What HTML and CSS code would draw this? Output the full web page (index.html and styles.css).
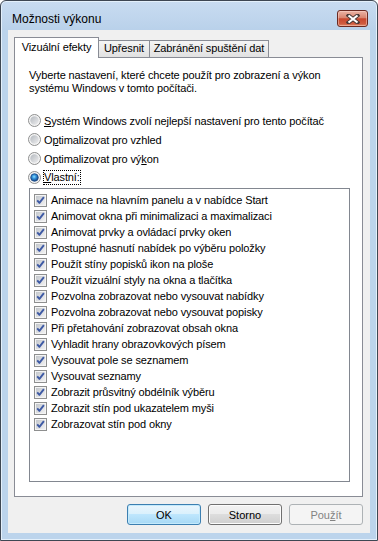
FILE: index.html
```html
<!DOCTYPE html>
<html lang="cs">
<head>
    <meta charset="UTF-8">
    <meta name="viewport" content="width=device-width, initial-scale=1.0">
    <title>Možnosti výkonu</title>
    <link rel="stylesheet" href="styles.css">
</head>
<body>

<svg class="sprites" width="0" height="0">
    <defs>
        <linearGradient id="cbfill" x1="0" y1="0" x2="1" y2="1">
            <stop offset="0" stop-color="#c3c7cc"/>
            <stop offset="1" stop-color="#f1f1f2"/>
        </linearGradient>
        <linearGradient id="rbfill" x1="0" y1="0" x2="1" y2="1">
            <stop offset="0" stop-color="#b4b9bf"/>
            <stop offset="1" stop-color="#eeeeef"/>
        </linearGradient>
        <radialGradient id="dot" cx="0.45" cy="0.4" r="0.6">
            <stop offset="0" stop-color="#8ee0ff"/>
            <stop offset="0.45" stop-color="#2f8ed8"/>
            <stop offset="1" stop-color="#173f7c"/>
        </radialGradient>
        <symbol id="cb" viewBox="0 0 13 13">
            <rect x="0.5" y="0.5" width="12" height="12" fill="#f4f4f4" stroke="#8e8f8f"/>
            <rect x="2" y="2" width="9" height="9" fill="url(#cbfill)"/>
            <path d="M3.2 6.4 L5.4 8.9 L9.9 3.1" fill="none" stroke="#3e5aa4" stroke-width="1.9" stroke-linejoin="round"/>
        </symbol>
        <symbol id="rb" viewBox="0 0 13 13">
            <circle cx="6.5" cy="6.5" r="6" fill="#f4f4f4" stroke="#8e8f8f"/>
            <circle cx="6.5" cy="6.5" r="4.2" fill="url(#rbfill)"/>
        </symbol>
        <symbol id="rbon" viewBox="0 0 13 13">
            <circle cx="6.5" cy="6.5" r="6" fill="#f4f4f4" stroke="#8e8f8f"/>
            <circle cx="6.5" cy="6.5" r="3.8" fill="url(#dot)" stroke="#1b4a86" stroke-width="0.8"/>
        </symbol>
    </defs>
</svg>

<div class="window">
    <div class="titlebar">
        <span class="title">Možnosti výkonu</span>
        <span class="close">
            <svg width="14" height="10" viewBox="0 0 14 10">
                <path d="M2.5 1.5 L11.5 8.5 M11.5 1.5 L2.5 8.5" stroke="#4a3a38" stroke-width="4" stroke-linecap="square"/>
                <path d="M2.5 1.5 L11.5 8.5 M11.5 1.5 L2.5 8.5" stroke="#ffffff" stroke-width="2.2"/>
            </svg>
        </span>
    </div>

    <div class="client">
        <div class="tabs">
            <div class="tab active">Vizuální efekty</div>
            <div class="tab tab-2">Upřesnit</div>
            <div class="tab tab-3">Zabránění spuštění dat</div>
        </div>

        <div class="panel">
            <p class="intro">Vyberte nastavení, které chcete použít pro zobrazení a výkon<br>systému Windows v tomto počítači.</p>

            <div class="radios">
                <div class="radio"><svg class="rb"><use href="#rb"/></svg><span><u>S</u>ystém Windows zvolí nejlepší nastavení pro tento počítač</span></div>
                <div class="radio"><svg class="rb"><use href="#rb"/></svg><span>O<u>p</u>timalizovat pro vzhled</span></div>
                <div class="radio"><svg class="rb"><use href="#rb"/></svg><span>Optimalizovat pro vý<u>k</u>on</span></div>
                <div class="radio"><svg class="rb"><use href="#rbon"/></svg><span class="focus"><u>V</u>lastní:</span></div>
            </div>

            <ul class="list">
                <li><svg class="cb"><use href="#cb"/></svg>Animace na hlavním panelu a v nabídce Start</li>
                <li><svg class="cb"><use href="#cb"/></svg>Animovat okna při minimalizaci a maximalizaci</li>
                <li><svg class="cb"><use href="#cb"/></svg>Animovat prvky a ovládací prvky oken</li>
                <li><svg class="cb"><use href="#cb"/></svg>Postupné hasnutí nabídek po výběru položky</li>
                <li><svg class="cb"><use href="#cb"/></svg>Použít stíny popisků ikon na ploše</li>
                <li><svg class="cb"><use href="#cb"/></svg>Použít vizuální styly na okna a tlačítka</li>
                <li><svg class="cb"><use href="#cb"/></svg>Pozvolna zobrazovat nebo vysouvat nabídky</li>
                <li><svg class="cb"><use href="#cb"/></svg>Pozvolna zobrazovat nebo vysouvat popisky</li>
                <li><svg class="cb"><use href="#cb"/></svg>Při přetahování zobrazovat obsah okna</li>
                <li><svg class="cb"><use href="#cb"/></svg>Vyhladit hrany obrazovkových písem</li>
                <li><svg class="cb"><use href="#cb"/></svg>Vysouvat pole se seznamem</li>
                <li><svg class="cb"><use href="#cb"/></svg>Vysouvat seznamy</li>
                <li><svg class="cb"><use href="#cb"/></svg>Zobrazit průsvitný obdélník výběru</li>
                <li><svg class="cb"><use href="#cb"/></svg>Zobrazit stín pod ukazatelem myši</li>
                <li><svg class="cb"><use href="#cb"/></svg>Zobrazovat stín pod okny</li>
            </ul>
        </div>

        <div class="buttons">
            <button class="btn default">OK</button>
            <button class="btn">Storno</button>
            <button class="btn disabled">Pou<u>ž</u>ít</button>
        </div>
    </div>
</div>

</body>
</html>
```

FILE: styles.css
```css
body {
    margin: 0;
    background: #ffffff;
    font-family: "Liberation Sans", Arial, sans-serif;
    font-size: 11px;
    letter-spacing: -0.12px;
    color: #000000;
}
.sprites {
    display: block;
    width: 0;
    height: 0;
    overflow: hidden;
}

/* window frame */
.window {
    width: 378px;
    height: 541px;
    box-sizing: border-box;
    display: flex;
    flex-direction: column;
    padding: 0 7px 7px;
    border: 1px solid #3e4753;
    border-radius: 6px 6px 0 0;
    background: linear-gradient(#c9dcf1 0, #b9d1ea 29px, #bcd4ec 29px);
    box-shadow: inset 0 0 0 1px #e4f0fb;
}
.titlebar {
    height: 29px;
    display: flex;
    justify-content: space-between;
    align-items: flex-start;
    margin: 0 -7px;
    padding: 0 9px 0 11px;
}
.title {
    margin-top: 11px;
    font-size: 12px;
    line-height: 14px;
    letter-spacing: 0;
    color: #000000;
}
.close {
    margin-top: 9px;
    width: 31px;
    height: 17px;
    box-sizing: border-box;
    display: flex;
    align-items: center;
    justify-content: center;
    border: 1px solid #6a2a22;
    border-radius: 3px;
    background: linear-gradient(#eab4a6 0%, #d98570 45%, #c8472e 52%, #cf5b3f 85%, #e08a6a 100%);
    box-shadow: inset 0 0 0 1px rgba(255, 220, 210, 0.45);
}

/* client area */
.client {
    flex: 1;
    display: flex;
    flex-direction: column;
    padding: 7px 7px 8px 6px;
    background: #f0f0f0;
}
.tabs {
    display: flex;
    align-items: flex-end;
    height: 20px;
    border-bottom: 1px solid #898c95;
}
.tab {
    box-sizing: border-box;
    height: 17px;
    line-height: 15px;
    text-align: center;
    border: 1px solid #898c95;
    border-bottom: none;
    border-left: none;
    background: linear-gradient(#f5f5f5, #e1e1e1);
}
.tab.active {
    width: 85px;
    height: 21px;
    line-height: 18px;
    margin-bottom: -1px;
    border-left: 1px solid #898c95;
    background: #ffffff;
}
.tab-2 {
    width: 51px;
}
.tab-3 {
    width: 119px;
}
.panel {
    flex: 1;
    padding: 11px 12px 0 14px;
    border: 1px solid #898c95;
    border-top: none;
    background: #ffffff;
}
.intro {
    margin: 0;
    line-height: 13px;
}
.radios {
    margin-top: 16px;
}
.radio {
    height: 19px;
    display: flex;
    align-items: center;
    gap: 3px;
    margin-left: -1px;
}
.rb, .cb {
    width: 13px;
    height: 13px;
    flex: none;
}
.focus {
    outline: 1px dotted #000000;
    outline-offset: 0;
    line-height: 13px;
}
.list {
    list-style: none;
    margin: 1px 0 0;
    width: 321px;
    height: 294px;
    box-sizing: border-box;
    padding: 3px 0 0 4px;
    border: 1px solid #828790;
}
.list li {
    height: 16px;
    display: flex;
    align-items: center;
    gap: 4px;
    white-space: nowrap;
}

/* buttons */
.buttons {
    display: flex;
    justify-content: flex-end;
    gap: 7px;
    margin-top: 7px;
}
.btn {
    width: 74px;
    height: 21px;
    box-sizing: border-box;
    padding: 0;
    font: inherit;
    color: #000000;
    border: 1px solid #707070;
    border-radius: 3px;
    background: linear-gradient(#f2f2f2 0, #ebebeb 50%, #dddddd 50%, #cfcfcf 100%);
    box-shadow: inset 0 0 0 1px #fcfcfc;
}
.btn.default {
    border-color: #3c7fb1;
    background: linear-gradient(#eaf6fd 0, #d9f0fc 50%, #bee6fd 50%, #a7d9f5 100%);
    box-shadow: inset 0 0 0 1px #c4eafc;
}
.btn.disabled {
    color: #838383;
    border-color: #adb2b5;
    background: #f4f4f4;
    box-shadow: none;
}
```
